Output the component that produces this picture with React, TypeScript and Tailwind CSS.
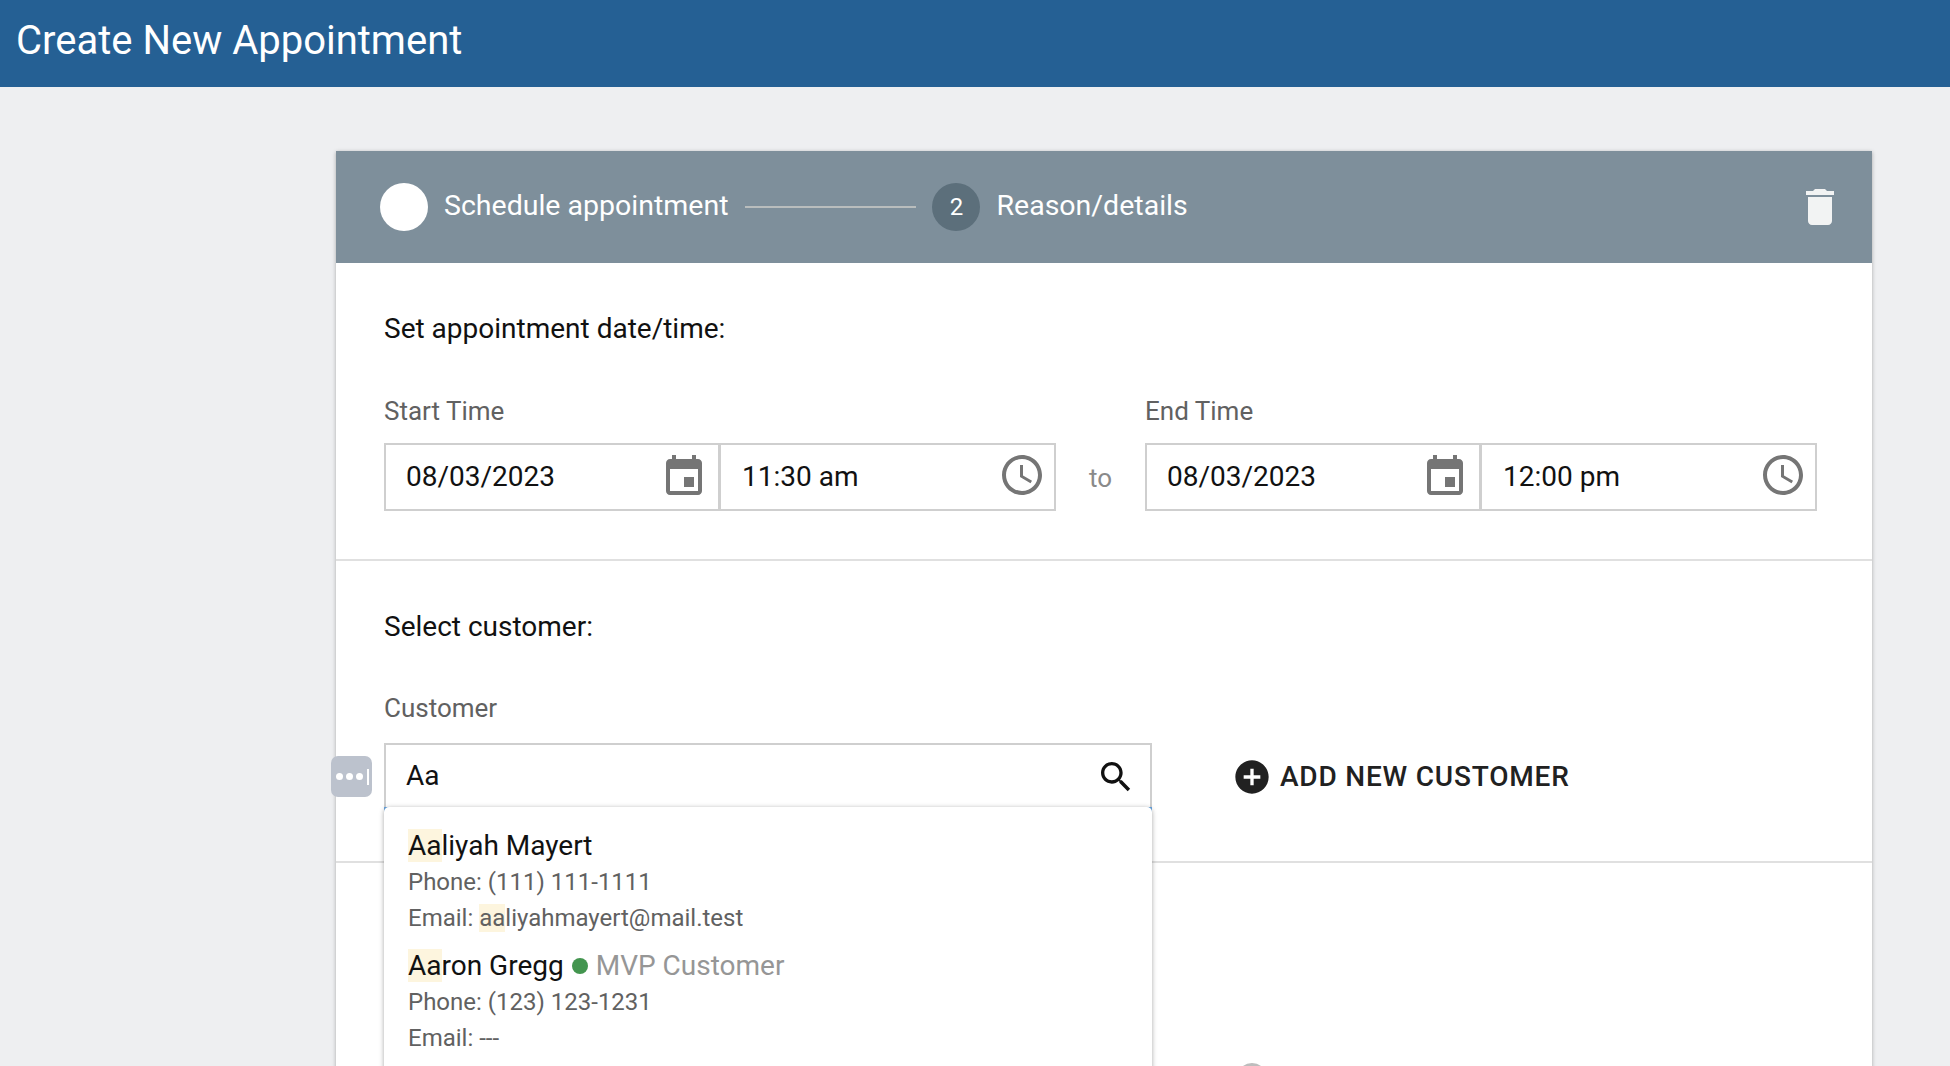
import React from 'react';

const EVENT_PATH = 'M17 12h-5v5h5v-5zM16 1v2H8V1H6v2H5c-1.11 0-1.99.9-1.99 2L3 19c0 1.1.89 2 2 2h14c1.1 0 2-.9 2-2V5c0-1.1-.9-2-2-2h-1V1h-2zm3 18H5V8h14v11z';
const CLOCK_PATH = 'M11.99 2C6.47 2 2 6.48 2 12s4.47 10 9.99 10C17.52 22 22 17.52 22 12S17.52 2 11.99 2zM12 20c-4.42 0-8-3.58-8-8s3.58-8 8-8 8 3.58 8 8-3.58 8-8 8zm.5-13H11v6l5.25 3.15.75-1.23-4.5-2.67z';
const SEARCH_PATH = 'M15.5 14h-.79l-.28-.27C15.41 12.59 16 11.11 16 9.5 16 5.91 13.09 3 9.5 3S3 5.91 3 9.5 5.91 16 9.5 16c1.61 0 3.09-.59 4.23-1.57l.27.28v.79l5 4.99L20.49 19l-4.99-5zm-6 0C7.01 14 5 11.99 5 9.5S7.01 5 9.5 5 14 7.01 14 9.5 11.99 14 9.5 14z';
const TRASH_PATH = 'M6 19c0 1.1.9 2 2 2h8c1.1 0 2-.9 2-2V7H6v12zM19 4h-3.5l-1-1h-5l-1 1H5v2h14V4z';
const ADD_PATH = 'M12 2C6.48 2 2 6.48 2 12s4.48 10 10 10 10-4.48 10-10S17.52 2 12 2zm5 11h-4v4h-2v-4H7v-2h4V7h2v4h4v2z';

const Icon = ({ d, className }: { d: string; className: string }) => (
  <svg viewBox="0 0 24 24" fill="currentColor" className={className}>
    <path d={d} />
  </svg>
);

const DateTimeField = ({ label, date, time }: { label: string; date: string; time: string }) => (
  <div className="w-[672px]">
    <div className="text-[26px] leading-[36px] text-[#616161]">{label}</div>
    <div className="mt-[14px] flex h-[68px] border-2 border-[#cfcfcf]">
      <div className="flex w-[335px] items-center justify-between border-r-[3px] border-[#cfcfcf] pl-[20px] pr-[10px]">
        <span className="text-[28px] text-[#111111]">{date}</span>
        <Icon d={EVENT_PATH} className="h-12 w-12 text-[#757575]" />
      </div>
      <div className="flex flex-1 items-center justify-between pl-[21px] pr-[8px]">
        <span className="text-[28px] text-[#111111]">{time}</span>
        <Icon d={CLOCK_PATH} className="mb-1 h-12 w-12 text-[#757575]" />
      </div>
    </div>
  </div>
);

const Mark = ({ children }: { children: React.ReactNode }) => (
  <span className="bg-[#fdf5de]">{children}</span>
);

export default function App() {
  return (
    <div className="h-[1066px] overflow-hidden bg-[#eeeff1] font-['Roboto',sans-serif]">
      <header className="flex h-[87px] items-center bg-[#256094] pb-[6px] pl-4">
        <h1 className="text-[40px] text-white">Create New Appointment</h1>
      </header>

      <main className="ml-[336px] mt-[64px] h-[1000px] w-[1536px] bg-white shadow-[0_1px_4px_rgba(0,0,0,0.3)]">
        {/* Stepper */}
        <div className="flex h-[112px] items-center bg-[#7e8f9b] pl-[44px] pr-[28px] text-white">
          <div className="h-12 w-12 rounded-full bg-white" />
          <span className="mb-[2px] ml-4 text-[28.5px]">Schedule appointment</span>
          <div className="ml-[17px] h-[2px] w-[171px] bg-[#b9bdbd]" />
          <div className="ml-4 flex h-12 w-12 items-center justify-center rounded-full bg-[#5c6f7b] text-[24px]">2</div>
          <span className="mb-[2px] ml-4 text-[28.5px]">Reason/details</span>
          <Icon d={TRASH_PATH} className="ml-auto h-12 w-12 text-[#f2f3f3]" />
        </div>

        {/* Date and time */}
        <section className="border-b-2 border-[#e0e0e0] pb-[48px] pl-[48px] pt-[48px]">
          <h2 className="text-[28px] leading-[36px] text-[#111111]">Set appointment date/time:</h2>
          <div className="mt-[46px] flex items-end">
            <DateTimeField label="Start Time" date="08/03/2023" time="11:30 am" />
            <div className="flex h-[68px] w-[89px] items-center justify-center pt-[3px] text-[26px] text-[#8a8a8a]">to</div>
            <DateTimeField label="End Time" date="08/03/2023" time="12:00 pm" />
          </div>
        </section>

        {/* Customer */}
        <section className="relative h-[302px] border-b-2 border-[#e0e0e0] pl-[48px] pt-[48px]">
          <h2 className="text-[28px] leading-[36px] text-[#111111]">Select customer:</h2>
          <div className="mt-[45px] text-[26px] leading-[36px] text-[#616161]">Customer</div>
          <div className="mt-[17px] flex items-start">
            <div className="flex h-[68px] w-[768px] items-center justify-between border-2 border-[#cfcfcf] pl-[20px] pr-[14px]">
              <span className="mb-[2px] text-[28px] text-[#111111]">Aa</span>
              <Icon d={SEARCH_PATH} className="h-10 w-10 text-[#111111]" />
            </div>
            <button className="ml-[80px] flex h-[68px] items-center gap-2 text-[28px] font-medium tracking-[0.8px] text-[#212121]">
              <Icon d={ADD_PATH} className="h-10 w-10" />
              ADD NEW CUSTOMER
            </button>
          </div>

          {/* Password manager bubble */}
          <div className="absolute left-[-5px] top-[195px] flex h-[41px] w-[41px] items-center rounded-[7px] bg-[#bcc2cd] pl-[5px]">
            <span className="h-[7px] w-[7px] rounded-full bg-white" />
            <span className="ml-[3px] h-[7px] w-[7px] rounded-full bg-white" />
            <span className="ml-[3px] h-[7px] w-[7px] rounded-full bg-white" />
            <span className="ml-[4px] h-[16px] w-[2px] bg-white" />
          </div>

          {/* Focus ring of the input, only its corners show past the results panel */}
          <div className="absolute left-[48px] top-[246px] z-10 h-[8px] w-[768px] border-x-2 border-t-2 border-[#6aa5e0]" />

          {/* Results */}
          <div className="absolute left-[48px] top-[246px] z-10 h-[300px] w-[768px] rounded-[5px] bg-white pl-[24px] pt-[21px] shadow-[0_1px_5px_rgba(0,0,0,0.35)]">
            <div className="text-[28px] leading-[36px] text-[#111111]"><Mark>Aa</Mark>liyah Mayert</div>
            <div className="text-[24px] leading-[36px] text-[#616161]">Phone: (111) 111-1111</div>
            <div className="text-[24px] leading-[36px] text-[#616161]">Email: <Mark>aa</Mark>liyahmayert@mail.test</div>
            <div className="mt-[12px] flex items-center text-[28px] leading-[36px] text-[#111111]">
              <span><Mark>Aa</Mark>ron Gregg</span>
              <span className="ml-2 h-4 w-4 rounded-full bg-[#43954f]" />
              <span className="ml-2 text-[#969696]">MVP Customer</span>
            </div>
            <div className="text-[24px] leading-[36px] text-[#616161]">Phone: (123) 123-1231</div>
            <div className="text-[24px] leading-[36px] text-[#616161]">Email: ---</div>
          </div>
        </section>

        <div className="relative">
          <div className="absolute left-[901px] top-[200px] h-[30px] w-[30px] rounded-full bg-[#bdbdbd]" />
        </div>
      </main>
    </div>
  );
}
